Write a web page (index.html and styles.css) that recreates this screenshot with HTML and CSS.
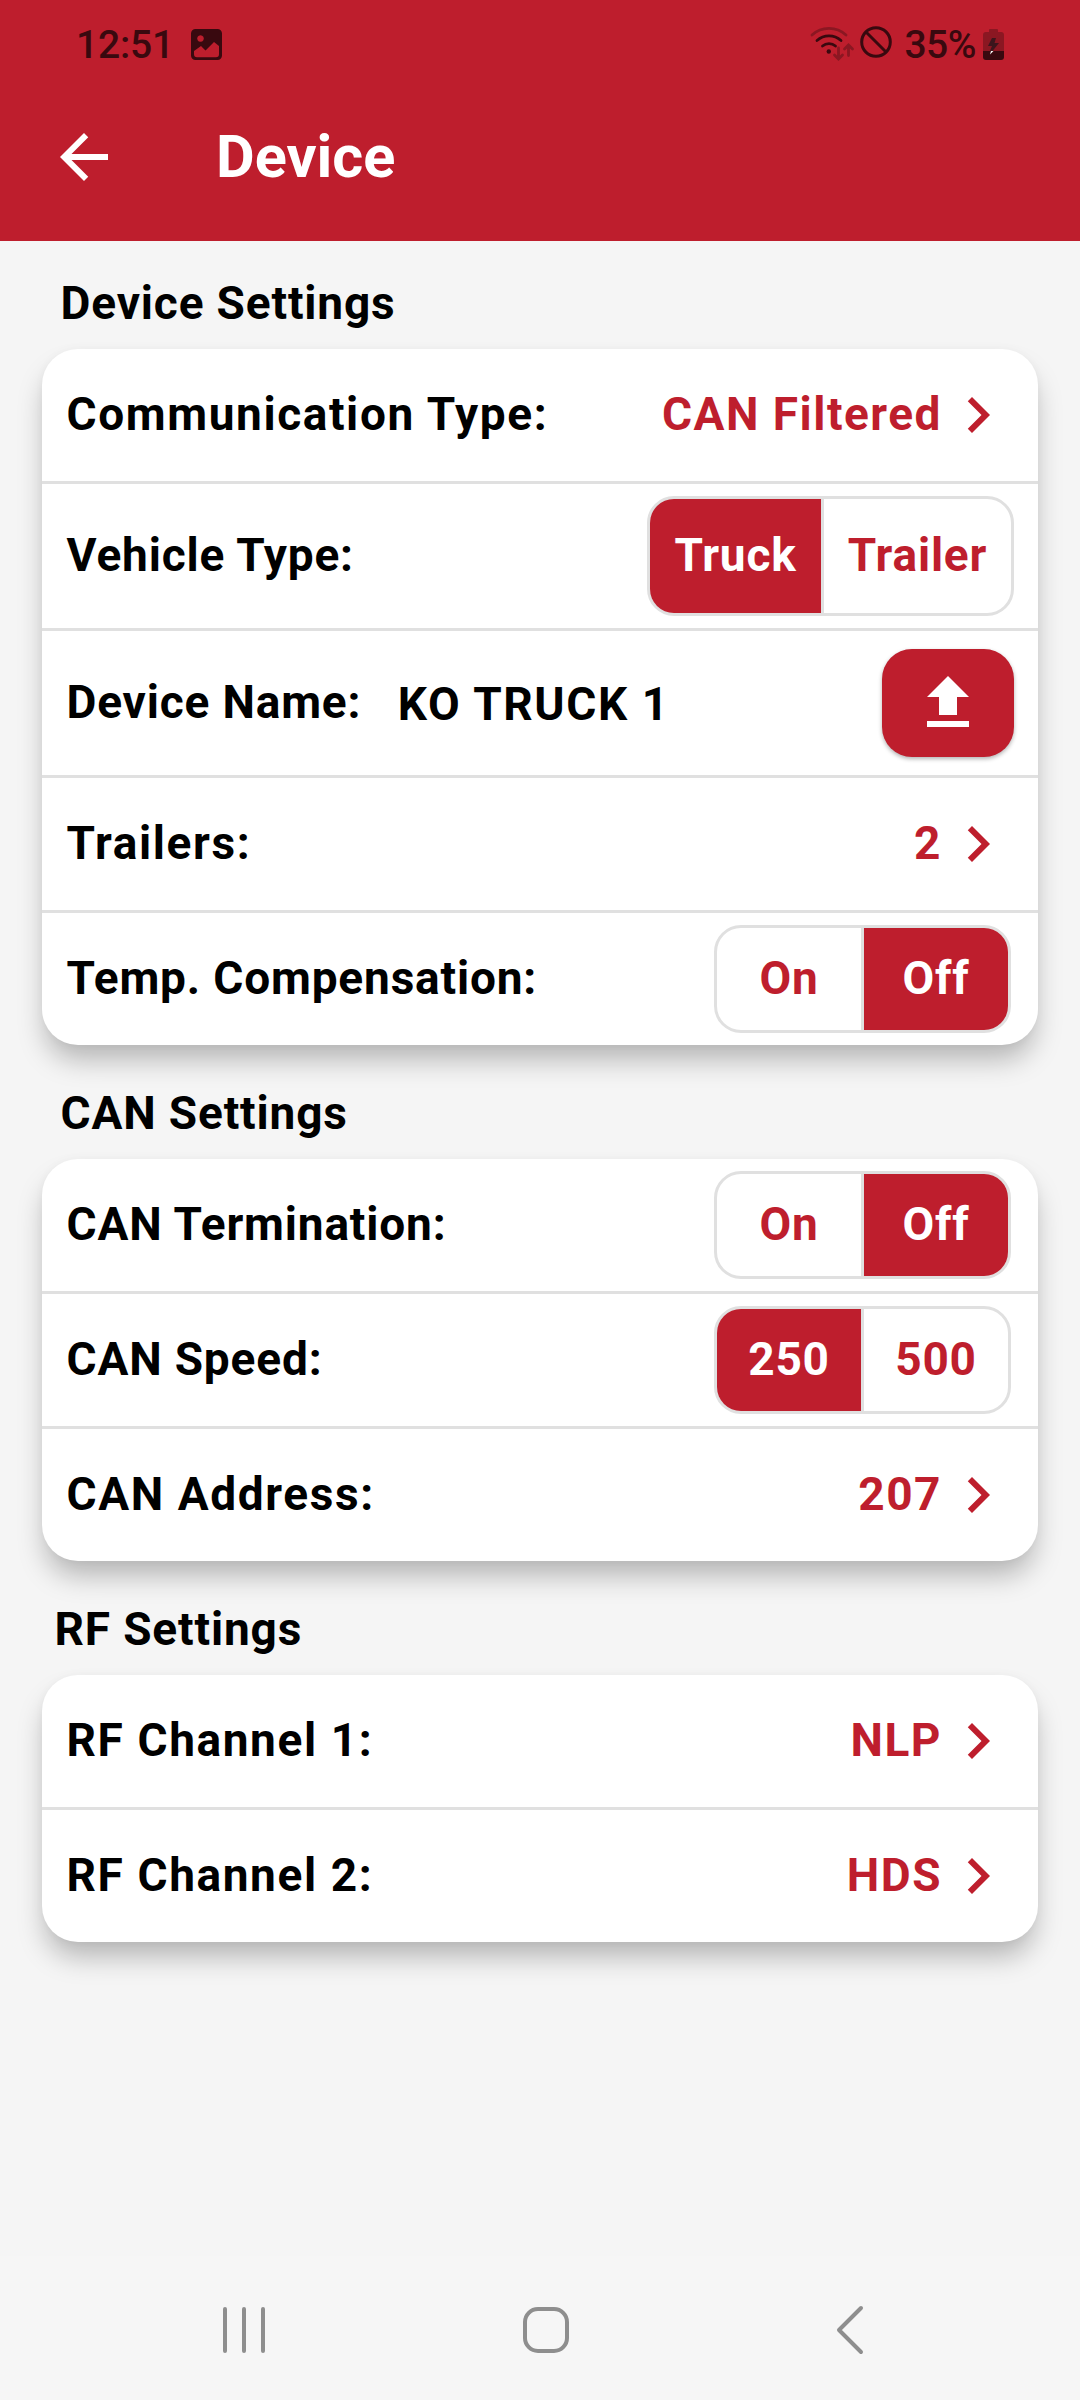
FILE: index.html
```html
<!DOCTYPE html>
<html lang="en">
<head>
<meta charset="utf-8">
<title>Device</title>
<link rel="stylesheet" href="styles.css">
</head>
<body>
<svg class="defs" aria-hidden="true">
  <symbol id="chevron" viewBox="0 0 24 24"><path d="M10 6L8.590 7.410 13.170 12l-4.580 4.590L10 18l6-6z"/></symbol>
</svg>
<div class="screen">
  <header class="header">
    <div class="status">
      <span class="status-text">12:51</span>
      <svg class="picture" width="31" height="31" viewBox="0 0 31 31"><path fill-rule="evenodd" d="M4.500 0h22a4.500 4.500 0 0 1 4.500 4.500v22a4.500 4.500 0 0 1-4.500 4.500h-22A4.500 4.500 0 0 1 0 26.500v-22A4.500 4.500 0 0 1 4.500 0zM9.500 6.200a3.300 3.300 0 1 0 .01 0zM3 22v3.200a3 3 0 0 0 3 3h19a3 3 0 0 0 3-3v-8.200l-5-4-8.500 8.500-4.500-4.500z"/></svg>
      <svg class="wifi" width="46" height="36" viewBox="0 0 46 36" fill="none" stroke-width="2.800" stroke-linecap="round">
        <g stroke="#8b1722"><path d="M2 9a25 25 0 0 1 34 0"/><path d="M28.500 22v10.500M24.500 29l4 4 4-4M38.500 29.500V20M34.500 23l4-4 4 4"/></g>
        <g stroke="#39090f"><path d="M7 14.500a18 18 0 0 1 24 0M12.500 20a10 10 0 0 1 13 0"/><circle cx="18.800" cy="25.500" r="2.200" fill="#39090f" stroke="none"/></g>
      </svg>
      <svg class="blocked" width="32" height="34" viewBox="0 0 32 34" fill="none" stroke="#39090f" stroke-width="3"><circle cx="16" cy="17" r="14.300"/><path d="M6 7l20 20"/></svg>
      <span class="status-text percent">35%</span>
      <svg class="battery" width="21" height="31" viewBox="0 0 21 31"><path fill="#8b1722" d="M7 0h7a1 1 0 0 1 1 1v2h3a3 3 0 0 1 3 3v17H0V6a3 3 0 0 1 3-3h3V1a1 1 0 0 1 1-1z"/><path fill="#39090f" d="M0 22h21v6a3 3 0 0 1-3 3H3a3 3 0 0 1-3-3z"/><path fill="#3c151c" d="M9 9h4l-1.500 5H16l-6.500 8H7l2-5H5z"/><path fill="#fff" d="M8 22h2.500L7 25.500z"/></svg>
    </div>
    <div class="appbar">
      <svg class="back" width="72" height="72" viewBox="0 0 24 24"><path d="M20 11H7.830l5.590-5.590L12 4l-8 8 8 8 1.410-1.410L7.830 13H20v-2z"/></svg>
      <h1 class="title">Device</h1>
    </div>
  </header>

  <main class="content">
    <h2 class="heading">Device Settings</h2>
    <section class="card">
      <div class="row"><span class="label label-link">Communication Type:</span><span class="value">CAN Filtered</span><svg class="chevron"><use href="#chevron"/></svg></div>
      <div class="row row-tall"><span class="label">Vehicle Type:</span>
        <div class="toggle toggle-wide"><span class="option option-on">Truck</span><span class="option">Trailer</span></div></div>
      <div class="row row-tall"><span class="label label-name">Device Name:</span><span class="name">KO TRUCK 1</span>
        <button class="upload" aria-label="Upload"><svg width="72" height="72" viewBox="0 0 24 24"><path d="M5 20h14v-2H5v2zM9 16h6v-6h4l-7-7-7 7h4v6z"/></svg></button></div>
      <div class="row"><span class="label label-link">Trailers:</span><span class="value">2</span><svg class="chevron"><use href="#chevron"/></svg></div>
      <div class="row"><span class="label">Temp. Compensation:</span>
        <div class="toggle"><span class="option">On</span><span class="option option-on">Off</span></div></div>
    </section>

    <h2 class="heading">CAN Settings</h2>
    <section class="card">
      <div class="row"><span class="label">CAN Termination:</span>
        <div class="toggle"><span class="option">On</span><span class="option option-on">Off</span></div></div>
      <div class="row"><span class="label">CAN Speed:</span>
        <div class="toggle"><span class="option option-on">250</span><span class="option">500</span></div></div>
      <div class="row"><span class="label label-link">CAN Address:</span><span class="value">207</span><svg class="chevron"><use href="#chevron"/></svg></div>
    </section>

    <h2 class="heading heading-rf">RF Settings</h2>
    <section class="card">
      <div class="row"><span class="label label-link">RF Channel 1:</span><span class="value">NLP</span><svg class="chevron"><use href="#chevron"/></svg></div>
      <div class="row"><span class="label label-link">RF Channel 2:</span><span class="value">HDS</span><svg class="chevron"><use href="#chevron"/></svg></div>
    </section>
  </main>

  <nav class="navbar">
    <svg width="42" height="50" viewBox="0 0 42 50"><path d="M2 4v42M21 4v42M40 4v42"/></svg>
    <svg class="home" width="50" height="50" viewBox="0 0 50 50"><rect x="4" y="4" width="42" height="42" rx="13"/></svg>
    <svg width="30" height="50" viewBox="0 0 30 50"><path d="M26 3L4 25l22 22"/></svg>
  </nav>
</div>
</body>
</html>
```
FILE: styles.css
```css
* { box-sizing: border-box; }
body { margin: 0; font-family: Roboto, "Liberation Sans", sans-serif; color: #000; }
.defs { display: none; }
.screen { width: 1080px; height: 2400px; display: flex; flex-direction: column; background: #f5f5f5; }

/* Status bar and app bar */
.header { height: 241px; background: #be1e2d; flex: none; }
.status { height: 84px; padding: 0 76px; display: flex; align-items: center; color: #39090f; }
.status svg { flex: none; }
.status-text { font-size: 39px; font-weight: 500; line-height: 46px; padding-top: 6px; letter-spacing: -.2px; }
.percent { letter-spacing: -.5px; }
.picture { margin: 5px auto 0 17px; fill: #39090f; }
.wifi { margin: 4px 4px 0 0; }
.blocked { margin-right: 12px; }
.battery { margin: 5px 0 0 7px; }
.appbar { height: 146px; display: flex; align-items: center; padding-left: 48px; }
.back { fill: #fff; }
.title { margin: 0 0 0 96px; font-size: 59.5px; line-height: 72px; font-weight: 700; color: #fff; }

/* Setting groups */
.content { flex: 1; padding: 0 42px; }
.heading { margin: 0; height: 114px; padding: 41px 0 0 18.5px; font-size: 46px; line-height: 54px; font-weight: 700; letter-spacing: .85px; }
.heading:first-child { height: 108px; padding-top: 35px; }
.heading-rf { padding-left: 12.5px; }
.card { border-radius: 36px; background: #fff; box-shadow: 0 18px 28px -4px rgba(0,0,0,.27), 0 0 10px rgba(0,0,0,.03); }
.row { height: 132px; display: flex; align-items: center; padding: 0 24px; }
.row + .row { border-top: 3px solid #e0e0e0; height: 135px; }
.row + .row-tall { height: 147px; }
.label, .name, .value { font-size: 46px; line-height: 54px; font-weight: 700; letter-spacing: .83px; }
.label { flex: 1; padding: 0 0 2px .5px; }
.label-link { letter-spacing: 1.6px; }
.label-name { flex: none; }
.name { flex: 1; margin-left: 36.5px; padding-top: 2px; letter-spacing: 1.6px; }
.value { padding-bottom: 2px; margin-right: -.8px; letter-spacing: 1.5px; color: #be1e2d; }
.chevron { width: 72px; height: 72px; flex: none; margin-left: .8px; fill: #be1e2d; }

/* Two-way switches */
.toggle { display: grid; grid-template-columns: 144px 144px; gap: 3px; margin-right: 3px; height: 108px; border: 3px solid #e0e0e0; border-radius: 27px; background: #e0e0e0; overflow: hidden; }
.toggle-wide { grid-template-columns: 171px 187px; height: 120px; margin-right: 0; }
.option { display: flex; align-items: center; justify-content: center; padding-bottom: 2px; background: #fff; color: #be1e2d; font-size: 46px; line-height: 54px; font-weight: 700; letter-spacing: .8px; }
.option-on { background: #be1e2d; color: #fff; }
.upload { width: 132px; height: 108px; padding: 0; border: 0; border-radius: 30px; background: #be1e2d; display: flex; align-items: center; justify-content: center; box-shadow: 0 2px 4px rgba(0,0,0,.3); }
.upload svg { fill: #fff; }

/* System navigation */
.navbar { height: 144px; background: #f6f6f6; display: flex; align-items: center; padding: 4px 215.5px 0 223px; justify-content: space-between; flex: none; }
.navbar svg { fill: none; stroke: #8e8e8e; stroke-width: 4; stroke-linecap: round; stroke-linejoin: round; }
.home { margin-right: 8px; }
```
